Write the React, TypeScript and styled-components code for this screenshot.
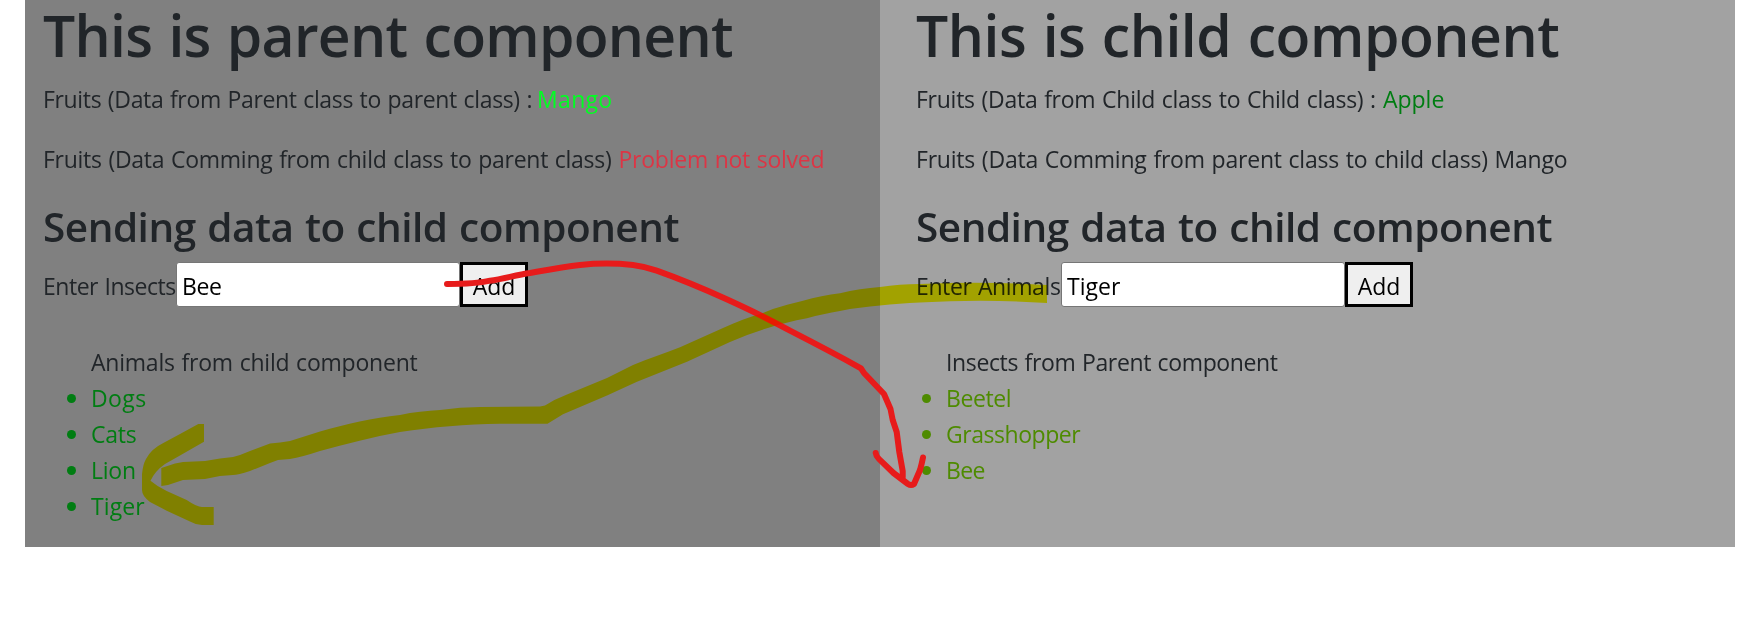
import React from 'react';
import styled, { createGlobalStyle } from 'styled-components';

const GlobalStyle = createGlobalStyle`
  *, *::before, *::after { box-sizing: border-box; }
  body {
    margin: 0;
    background: #fff;
    color: #212529;
    font-family: "Open Sans", "Noto Sans", sans-serif;
    font-size: 23px;
    line-height: 36px;
    word-spacing: 1px;
    overflow: hidden;
  }
`;

const Page = styled.main`
  position: relative;
  display: flex;
  width: 1762px;
  height: 618px;
  padding: 0 27px 71px 25px;
`;

const Column = styled.section<{ $bg: string; $inset: number }>`
  flex: none;
  width: 855px;
  padding-left: ${(p) => p.$inset}px;
  background: ${(p) => p.$bg};
  white-space: nowrap;
`;

const Title = styled.h1<{ $track: number }>`
  margin: 0 0 11px;
  font-size: 57px;
  font-weight: 600;
  line-height: 70px;
  letter-spacing: ${(p) => p.$track}px;
  word-spacing: 2px;
`;

const Line = styled.p`
  margin: 0 0 24px;
`;

const Subtitle = styled.h3`
  margin: 0 0 10px;
  padding-top: 1px;
  font-size: 40.5px;
  font-weight: 600;
  line-height: 50px;
  letter-spacing: -0.48px;
  word-spacing: 1.5px;
`;

const Text = styled.span<{ $track: number; $color?: string; $gap?: number }>`
  letter-spacing: ${(p) => p.$track}px;
  color: ${(p) => p.$color ?? 'inherit'};
  margin-left: ${(p) => p.$gap ?? 0}px;
`;

const Form = styled.form`
  display: flex;
  height: 45px;
  margin-bottom: 37px;
`;

const Label = styled.label<{ $width: number; $track: number }>`
  width: ${(p) => p.$width}px;
  padding-top: 6px;
  letter-spacing: ${(p) => p.$track}px;
`;

const Input = styled.input<{ $track: number }>`
  width: 284px;
  height: 45px;
  padding: 3px 5px 0;
  border: 1px solid #767676;
  border-radius: 3px;
  outline: none;
  background: #fff;
  color: #000;
  font: inherit;
  letter-spacing: ${(p) => p.$track}px;
`;

const AddButton = styled.button`
  width: 68px;
  height: 45px;
  padding: 4px 0 0;
  border: 3px solid #000;
  background: #efefef;
  color: #000;
  font: inherit;
  line-height: 35px;
  letter-spacing: 0;
`;

const List = styled.ul<{ $offset: number }>`
  margin: 0;
  padding: 0 0 0 ${(p) => p.$offset}px;
  list-style: none;
`;

const ListHeading = styled.li<{ $track: number }>`
  padding-left: 24px;
  letter-spacing: ${(p) => p.$track}px;
`;

const Item = styled.li<{ $color: string; $track: number }>`
  display: flex;
  align-items: center;
  gap: 15px;
  color: ${(p) => p.$color};
  letter-spacing: ${(p) => p.$track}px;

  &::before {
    content: "";
    width: 9px;
    height: 9px;
    border-radius: 50%;
    background: currentColor;
  }
`;

const Ink = styled.svg<{ $blend?: boolean }>`
  position: absolute;
  inset: 0;
  pointer-events: none;
  mix-blend-mode: ${(p) => (p.$blend ? 'multiply' : 'normal')};
`;

const animals = [
  { name: 'Dogs', track: 0.4 },
  { name: 'Cats', track: -0.25 },
  { name: 'Lion', track: -0.25 },
  { name: 'Tiger', track: 0.1 },
];
const insects = [
  { name: 'Beetel', track: -0.4 },
  { name: 'Grasshopper', track: -0.45 },
  { name: 'Bee', track: -0.6 },
];

export default function App() {
  return (
    <>
      <GlobalStyle />
      <Page>
        <Column $bg="#808080" $inset={18}>
          <Title $track={-0.69}>This is parent component</Title>
          <Line>
            <Text $track={-0.35}>Fruits (Data from Parent class to parent class) :</Text>
            <Text $track={0.3} $color="#00ff22" $gap={5}>Mango</Text>
          </Line>
          <Line>
            <Text $track={-0.27}>Fruits (Data Comming from child class to parent class)</Text>
            <Text $track={-0.25} $color="#dc3545" $gap={7}>Problem not solved</Text>
          </Line>
          <Subtitle>Sending data to child component</Subtitle>
          <Form>
            <Label $width={133} $track={-0.48}>Enter Insects</Label>
            <Input $track={-0.4} defaultValue="Bee" />
            <AddButton type="button">Add</AddButton>
          </Form>
          <List $offset={24}>
            <ListHeading $track={-0.22}>Animals from child component</ListHeading>
            {animals.map(({ name, track }) => (
              <Item key={name} $color="#007d12" $track={track}>{name}</Item>
            ))}
          </List>
        </Column>
        <Column $bg="#a2a2a2" $inset={36}>
          <Title $track={-0.44}>This is child component</Title>
          <Line>
            <Text $track={-0.26}>Fruits (Data from Child class to Child class) :</Text>
            <Text $track={0} $color="#007d12" $gap={7}>Apple</Text>
          </Line>
          <Line>
            <Text $track={-0.21}>Fruits (Data Comming from parent class to child class) Mango</Text>
          </Line>
          <Subtitle>Sending data to child component</Subtitle>
          <Form>
            <Label $width={145} $track={-0.4}>Enter Animals</Label>
            <Input $track={0} defaultValue="Tiger" />
            <AddButton type="button">Add</AddButton>
          </Form>
          <List $offset={6}>
            <ListHeading $track={-0.37}>Insects from Parent component</ListHeading>
            {insects.map(({ name, track }) => (
              <Item key={name} $color="#4e8b00" $track={track}>{name}</Item>
            ))}
          </List>
        </Column>

        {/* Red pen arrow: insect field to the child list */}
        <Ink width="1762" height="618" viewBox="0 0 1762 618" fill="none" stroke="#e71b1b" strokeWidth="6" strokeLinecap="round" strokeLinejoin="round">
          <path d="M447 284C462 284 476 284 490 280.700C503 279 516 275 530 273C547 270 563 267 580 265C598 263 615 263 633 265C641 266 649 268 656.700 270.700C680 279 704 289 726.700 299.300C748 309 769 319 790 330.700C814 343 837 355 861 368.300L864 373L884 394L890.500 409L892.700 420L896.700 432L899.300 452L902.700 471V477" />
          <path d="M875.700 453C876 456 877 457 879 459L893.500 473L908 484Q911 486 914 484L920 470Q922 463 923 457.500" />
        </Ink>

        {/* Yellow highlighter arrow: animal field to the parent list */}
        <Ink $blend width="1762" height="618" viewBox="0 0 1762 618" fill="#ffff00">
          <path d="M161.300 468L175 463.500L183 462L205 461L220 458.500L233 457Q241 455 250 451L270 443.500L280 442.500L290 441L320 431.500C346 424 373 418 400 415C413 412 427 411 440 410Q460 407 480 407L540 406.500L545 405.500Q555 399 567 394.500L607 378L633 365C649 358 664 354 680 347.300L723 328C736 322 749 317 763 313C776 307 790 304 803 300.700C815 297 828 295 840 293.300C853 290 867 288 880 287C893 285 906 284 920 284Q985 281 1047 285V303Q985 299 920 302.500C906 303 893 304 880 305.500C867 307 853 308 840 311C829 313 818 315 807 318.300C793 321 780 324 767 328.300Q748 334 730 342L687 361.700L637 381.700L607 395.500L563 414.300L547.500 423.700H500C466 424 433 427 400 432C373 437 346 444 320 451Q302 457 290 459L278 460L270 463L250 471Q238 475 233 475L220 476L205 479L183 480L168 485L161.300 486Z" />
          <path d="M198.300 424H204V441.700L180 455.500L165 464Q155 471 150.500 480.700Q158 487 166.700 491L186.700 500Q197 507 202 507H213.700V525H202Q196 525 190 521.500L166.700 510.700L150 502Q142 496 142 490V474Q143 464 146 459Q151 449 163.300 443L180 434Z" />
        </Ink>
      </Page>
    </>
  );
}
